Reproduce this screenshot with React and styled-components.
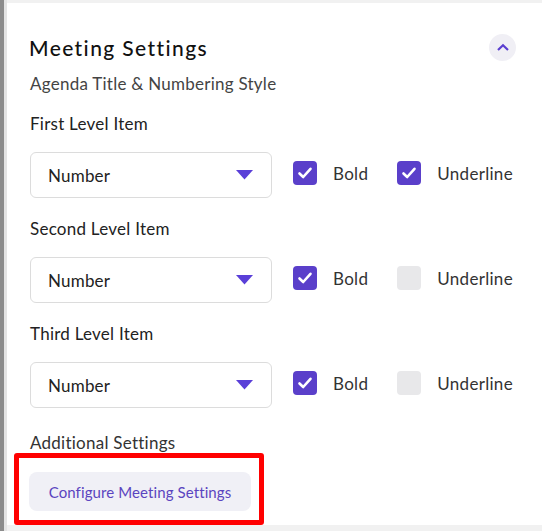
import React from "react";
import styled, { createGlobalStyle } from "styled-components";

const Global = createGlobalStyle`
  html, body { margin: 0; padding: 0; background: #f1f1f1; }
  body { font-family: Lato, "Open Sans", sans-serif; width: 542px; height: 531px; overflow: hidden; }
`;

const Page = styled.div`
  display: flex;
  height: 531px;
  width: 542px;
`;

const SideEdge = styled.div`
  width: 4px;
  flex: none;
  background: #8c8c8c;
`;

const Gutter = styled.div`
  width: 3px;
  flex: none;
  background: #e4e4e4;
`;

const Main = styled.div`
  flex: 1;
  display: flex;
  flex-direction: column;
  padding-top: 3px;
  padding-bottom: 6px;
  background: #f1f1f1;
`;

const Card = styled.div`
  flex: 1;
  background: #fff;
  padding: 31px 0 0 22px;
`;

const Header = styled.div`
  display: flex;
  align-items: center;
  justify-content: space-between;
  padding-right: 26px;
`;

const Title = styled.h2`
  margin: 0;
  font-size: 21px;
  font-weight: 500;
  color: #111;
  line-height: 26px;
  letter-spacing: 1.4px;
`;

const ToggleButton = styled.button`
  width: 27px;
  height: 27px;
  border-radius: 50%;
  border: none;
  background: #f0eff5;
  display: flex;
  align-items: center;
  justify-content: center;
  padding: 0;
`;

const Body = styled.div`
  padding-left: 1px;
`;

const Text = styled.div`
  font-size: 17px;
  letter-spacing: 0.25px;
  line-height: 20px;
`;

const SectionTitle = styled(Text)`
  color: #444;
  margin-top: 13px;
`;

const LevelLabel = styled(Text)`
  color: #222;
  margin-top: ${(p) => p.$top}px;
`;

const Row = styled.div`
  display: flex;
  align-items: center;
  margin-top: 18px;
`;

const Select = styled.div`
  width: 242px;
  height: 46px;
  box-sizing: border-box;
  border: 1px solid #dcdcdc;
  border-radius: 6px;
  display: flex;
  align-items: center;
  justify-content: space-between;
  padding: 0 18px 0 17px;
  font-size: 17px;
  letter-spacing: 0.2px;
  color: #222;
`;

const Check = styled.label`
  display: flex;
  align-items: center;
  gap: 16px;
  font-size: 17px;
  letter-spacing: 0.3px;
  color: #333;
  margin-left: ${(p) => p.$left}px;
  margin-top: -4px;
`;

const Box = styled.span`
  width: 24px;
  height: 24px;
  border-radius: 4px;
  background: ${(p) => (p.$checked ? "#5a3fca" : "#e8e8ea")};
  display: flex;
  align-items: center;
  justify-content: center;
`;

const AddTitle = styled(Text)`
  color: #333;
  margin-top: 25px;
`;

const Highlight = styled.div`
  margin: 0 0 0 -16px;
  width: 250px;
  height: 72px;
  box-sizing: border-box;
  border: 5px solid #ff0000;
  border-radius: 3px;
  padding: 14px 0 0 10px;
`;

const ConfigButton = styled.button`
  width: 222px;
  height: 39px;
  border: none;
  border-radius: 8px;
  background: #f0f0f6;
  color: #5a45c0;
  font-family: Lato, sans-serif;
  font-size: 15px;
  letter-spacing: 0.1px;
  padding: 0;
`;

const Caret = () => (
  <svg width="17" height="10" viewBox="0 0 17 10">
    <path d="M0 0 L17 0 L8.5 9.5 Z" fill="#5a3fd8" />
  </svg>
);

const Tick = () => (
  <svg width="16" height="14" viewBox="0 0 16 14">
    <path d="M2.5 7.5 L6.2 11 L13.5 2.8" fill="none" stroke="#fff" strokeWidth="2.6" strokeLinecap="round" strokeLinejoin="round" />
  </svg>
);

const ChevronUp = () => (
  <svg width="14" height="9" viewBox="0 0 14 9">
    <path d="M2 7 L7 2.3 L12 7" fill="none" stroke="#5a3fd0" strokeWidth="2.2" />
  </svg>
);

const levels = [
  { label: "First Level Item", bold: true, underline: true, top: 20 },
  { label: "Second Level Item", bold: true, underline: false, top: 21 },
  { label: "Third Level Item", bold: true, underline: false, top: 21 },
];

export default function App() {
  return (
    <>
      <Global />
      <Page>
        <SideEdge />
        <Gutter />
        <Main>
          <Card>
            <Header>
              <Title>Meeting Settings</Title>
              <ToggleButton aria-label="Collapse">
                <ChevronUp />
              </ToggleButton>
            </Header>
            <Body>
              <SectionTitle>Agenda Title &amp; Numbering Style</SectionTitle>
              {levels.map((lv) => (
                <React.Fragment key={lv.label}>
                  <LevelLabel $top={lv.top}>{lv.label}</LevelLabel>
                  <Row>
                    <Select>
                      Number
                      <Caret />
                    </Select>
                    <Check $left={21}>
                      <Box $checked={lv.bold}>{lv.bold && <Tick />}</Box>
                      Bold
                    </Check>
                    <Check $left={29}>
                      <Box $checked={lv.underline}>{lv.underline && <Tick />}</Box>
                      Underline
                    </Check>
                  </Row>
                </React.Fragment>
              ))}
              <AddTitle>Additional Settings</AddTitle>
              <Highlight>
                <ConfigButton>Configure Meeting Settings</ConfigButton>
              </Highlight>
            </Body>
          </Card>
        </Main>
      </Page>
    </>
  );
}
